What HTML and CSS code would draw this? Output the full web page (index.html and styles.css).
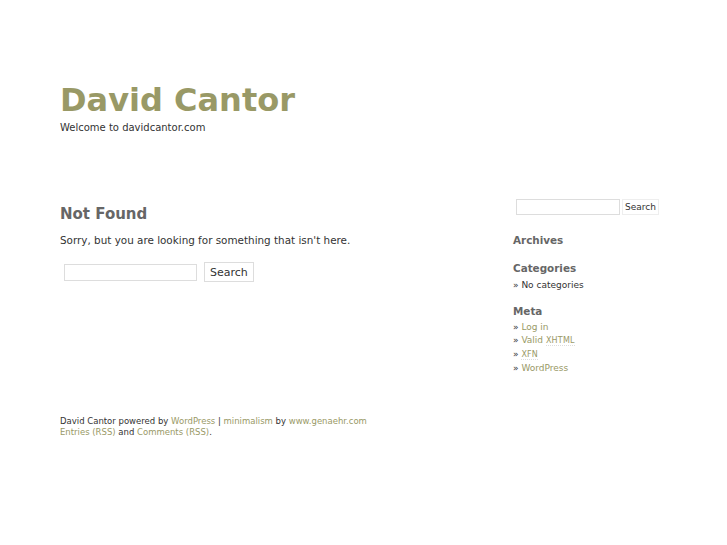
FILE: index.html
```html
<!DOCTYPE html>
<html>
<head>
<meta charset="utf-8">
<link rel="stylesheet" href="styles.css">
</head>
<body>
<div class="wrap">
  <div class="header">
    <h1 class="title"><a href="#">David Cantor</a></h1>
    <div class="tagline">Welcome to davidcantor.com</div>
  </div>
  <div class="main">
    <div class="content">
      <h2 class="nf">Not Found</h2>
      <p class="sorry">Sorry, but you are looking for something that isn't here.</p>
      <form class="search">
        <input type="text" class="s-input">
        <button type="button" class="s-btn">Search</button>
      </form>
    </div>
    <div class="sidebar">
      <form class="side-search">
        <input type="text" class="ss-input">
        <button type="button" class="ss-btn">Search</button>
      </form>
      <h3 class="sh first">Archives</h3>
      <h3 class="sh">Categories</h3>
      <ul class="list cat">
        <li>No categories</li>
      </ul>
      <h3 class="sh meta">Meta</h3>
      <ul class="list">
        <li><a href="#">Log in</a></li>
        <li><a href="#">Valid <abbr>XHTML</abbr></a></li>
        <li><a href="#"><abbr>XFN</abbr></a></li>
        <li><a href="#">WordPress</a></li>
      </ul>
    </div>
  </div>
  <div class="footer">
    <div>David Cantor powered by <a href="#">WordPress</a> | <a href="#">minimalism</a> by <a href="#">www.genaehr.com</a></div>
    <div><a href="#">Entries (RSS)</a> and <a href="#">Comments (RSS)</a>.</div>
  </div>
</div>
</body>
</html>
```
FILE: styles.css
```css
html, body { margin: 0; padding: 0; background: #fff; }
body { font-family: "DejaVu Sans", Verdana, sans-serif; color: #333; }
a { color: #999966; text-decoration: none; }
.wrap { width: 600px; margin-left: 60px; padding-top: 80px; }
.header { height: 120px; }
.title { margin: 0; font-size: 32px; font-weight: bold; line-height: 40px; }
.title a { color: #999966; }
.tagline { font-size: 10px; line-height: 12px; color: #333; margin-top: 2px; }
.main { display: flex; justify-content: space-between; }
.content { width: 420px; }
.nf { margin: 0; font-size: 15px; line-height: 20px; color: #666; padding-top: 4px; }
.sorry { margin: 9px 0 0; font-size: 10.4px; line-height: 14px; color: #333; }
.search { margin: 15px 0 0 4px; display: flex; align-items: center; gap: 7px; }
.s-input { width: 131px; height: 15px; border: 1px solid #ddd; padding: 0; margin: 0; }
.s-btn { font-family: "DejaVu Sans", sans-serif; font-size: 11px; color: #333; background: #fff; border: 1px solid #ddd; height: 20px; padding: 0 5px; margin: 0; }
.sidebar { width: 147px; }
.side-search { display: flex; align-items: center; gap: 2px; margin-left: 3px; margin-top: -1px; }
.ss-input { width: 102px; height: 14px; border: 1px solid #ddd; padding: 0; margin: 0; }
.ss-btn { font-family: "DejaVu Sans", sans-serif; font-size: 9px; color: #333; background: #fff; border: 1px solid #eee; height: 16px; padding: 0 2px; margin: 0; }
.sh { margin: 0; font-size: 10.4px; line-height: 14px; color: #666; font-weight: bold; margin-top: 14px; }
.sh.first { margin-top: 18px; }
.sh.meta { margin-top: 11px; }
.list { list-style: none; margin: 3px 0 0; padding: 0; font-size: 9px; line-height: 13.7px; color: #333; }
.list.cat { margin-top: 4px; }
.list li::before { content: "» "; color: #333; }
abbr { font-size: 8px; letter-spacing: 0.2px; text-decoration: none; border-bottom: 1px dotted #ddd; }
.footer { margin-top: 40px; font-size: 8.5px; line-height: 11px; color: #333; }
```
